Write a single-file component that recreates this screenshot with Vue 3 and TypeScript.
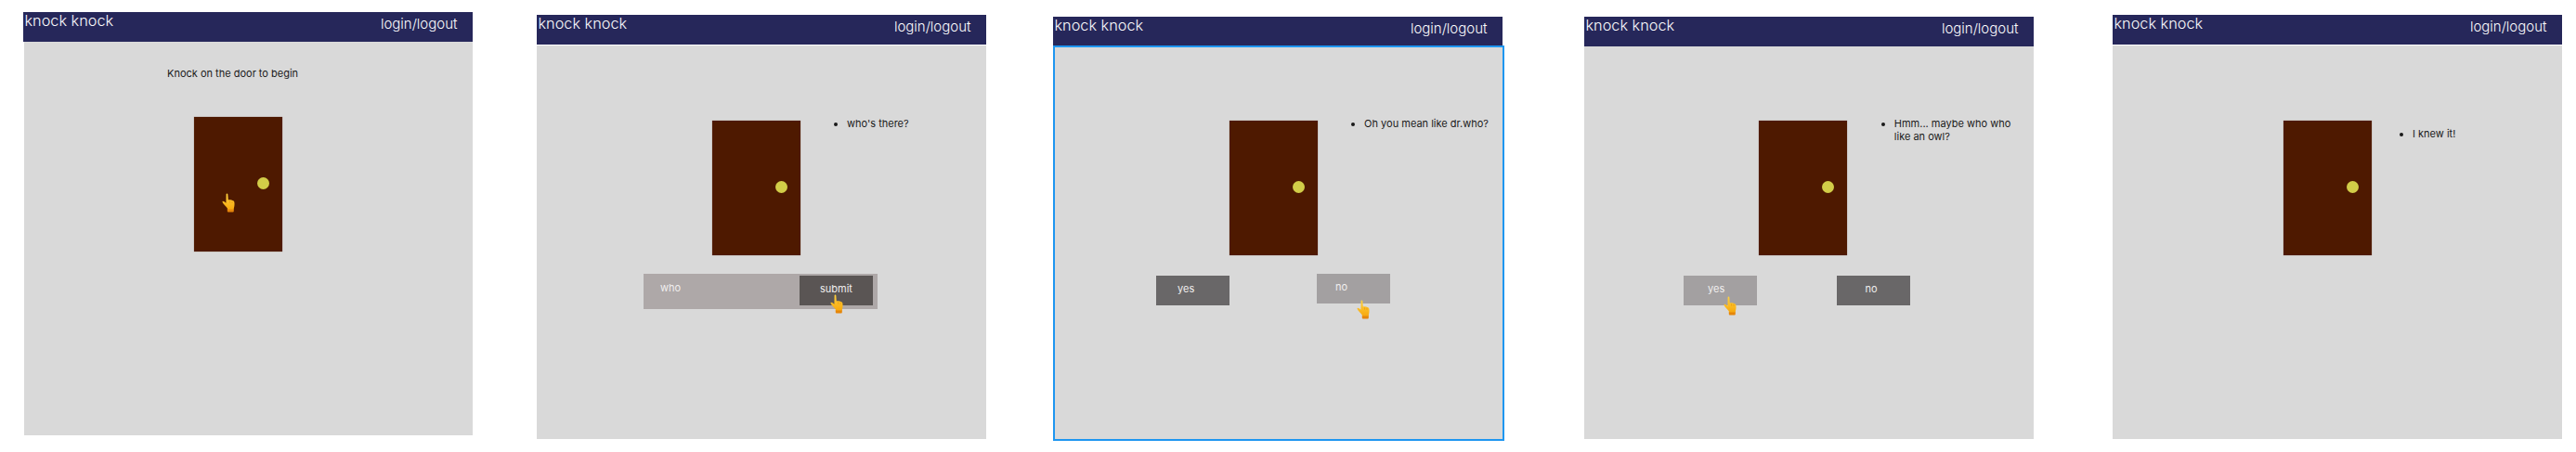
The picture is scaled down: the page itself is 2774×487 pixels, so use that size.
<script setup lang="ts">
interface Choice {
  label: string
  hover?: boolean
}

interface Frame {
  id: string
  prompt?: string
  line?: string
  guess?: string
  choices?: Choice[]
  hand: boolean
}

const frames: Frame[] = [
  { id: 'f1', prompt: 'Knock on the door to begin', hand: true },
  { id: 'f2', line: "who's there?", guess: 'who', hand: true },
  {
    id: 'f3',
    line: 'Oh you mean like dr.who?',
    choices: [{ label: 'yes' }, { label: 'no', hover: true }],
    hand: true,
  },
  {
    id: 'f4',
    line: 'Hmm... maybe who who like an owl?',
    choices: [{ label: 'yes', hover: true }, { label: 'no' }],
    hand: true,
  },
  { id: 'f5', line: 'I knew it!', hand: false },
]
</script>

<template>
  <div class="strip">
    <section v-for="frame in frames" :key="frame.id" class="frame" :class="frame.id">
      <header class="topbar">
        <span class="brand">knock knock</span>
        <a class="auth">login/logout</a>
      </header>

      <main class="stage">
        <p v-if="frame.prompt" class="prompt">{{ frame.prompt }}</p>

        <div class="scene">
          <div class="door"><span class="knob" /></div>
          <ul v-if="frame.line" class="speech">
            <li>{{ frame.line }}</li>
          </ul>
        </div>

        <div v-if="frame.guess" class="guess">
          <span class="guess-text">{{ frame.guess }}</span>
          <button class="submit" type="button">submit</button>
        </div>

        <div v-if="frame.choices" class="choices">
          <button
            v-for="choice in frame.choices"
            :key="choice.label"
            class="choice"
            :class="[choice.label, { hover: choice.hover }]"
            type="button"
          >
            {{ choice.label }}
          </button>
        </div>
      </main>

      <svg v-if="frame.hand" class="hand" viewBox="0 0 14 21" width="14" height="21">
        <defs>
          <linearGradient id="handFill" x1="0" y1="0" x2="0" y2="1">
            <stop offset="0" stop-color="#ffd23f" />
            <stop offset="1" stop-color="#f7a90f" />
          </linearGradient>
        </defs>
        <rect x="5.8" y="16" width="7" height="4.6" rx="1" fill="#e5860b" />
        <path
          d="M4.6 1.2C4.6.3 6.2.3 6.3 1.2L6.8 7.4C8.5 7.2 11 7.6 12.6 8.6C13.4 9.2 13.6 10.5 13.5 12.5C13.4 14.5 13 16 12.4 17.4L6.4 17.4C5.4 15.5 3.8 14 2 12C.8 10.6.2 9.4.6 9C1.3 8.4 3 9.6 4.4 10.8Z"
          fill="url(#handFill)"
        />
        <path d="M8.6 8.2v2.4M11 8.6v2.2" stroke="#e8960f" stroke-width=".7" fill="none" />
      </svg>
    </section>
  </div>
</template>

<style scoped>
.strip {
  display: flex;
  align-items: flex-start;
  padding-left: 25px;
  font-family: Inter, 'Liberation Sans', sans-serif;
}

.frame {
  position: relative;
  flex: none;
  width: 484px;
}

.topbar {
  display: flex;
  justify-content: space-between;
  height: 32px;
  background: #26275a;
  color: #fbfbfd;
  font-weight: 300;
  line-height: 19px;
}

.brand {
  padding-left: 1.5px;
  font-size: 16.3px;
}

.auth {
  padding: 2.5px 16.5px 0 0;
  font-size: 15px;
}

.stage {
  box-sizing: border-box;
  background: #d9d9d9;
  color: #1a1a1a;
  font-size: 11px;
  line-height: 14px;
}

.prompt {
  margin: 0 0 40px 154px;
}

.scene {
  display: flex;
  align-items: flex-start;
}

.door {
  display: flex;
  flex: none;
  justify-content: flex-end;
  box-sizing: border-box;
  width: 95px;
  height: 145px;
  padding: 65px 14px 0 0;
  background: #4e1900;
  box-shadow: 0 0 1px rgba(78, 25, 0, 0.55);
}

.knob {
  width: 13px;
  height: 13px;
  border-radius: 50%;
  background: #d2cd48;
}

.speech {
  margin: -4px 0 0 50.5px;
  padding: 0;
  max-width: 135px;
}

.guess {
  display: flex;
  justify-content: space-between;
  box-sizing: border-box;
  width: 252px;
  height: 38px;
  margin: 20px 0 0 115px;
  padding: 2px 5px 0 18px;
  background: #aea8a8;
  color: #f0eeee;
}

.guess-text {
  padding-top: 6px;
}

.submit,
.choice {
  width: 79px;
  height: 32px;
  margin: 0;
  padding: 0 0 4px;
  border: 0;
  color: #f0eeee;
  font: inherit;
}

.submit {
  background: #5a5554;
}

.choices {
  display: flex;
  align-items: flex-start;
  margin-top: 22px;
}

.choice {
  background: #696768;
  text-align: left;
}

.choice.hover {
  background: #a3a0a1;
}

.hand {
  position: absolute;
}

.f1 {
  margin-top: 13px;
}

.f1 .stage {
  height: 424px;
  margin-left: 1px;
  width: 483px;
  padding-top: 27px;
}

.f1 .door {
  margin-left: 183px;
}

.f1 .hand {
  left: 213.5px;
  top: 195px;
}

.f2 {
  margin: 16px 0 0 69px;
}

.f2 .stage,
.f5 .stage {
  height: 424px;
  margin-top: 1px;
  padding-top: 81px;
}

.f2 .door {
  margin-left: 188.5px;
}

.f2 .hand {
  left: 316px;
  top: 300.7px;
}

.f3 {
  margin: 18px 0 0 72px;
}

.f3 .stage {
  position: relative;
  width: 486px;
  height: 426px;
  margin-top: -1px;
  padding-top: 79px;
  border: 2px solid #1e96f0;
}

.f3 .door {
  margin-left: 187.6px;
}

.f3 .choices {
  margin-left: 109px;
}

.f3 .yes {
  padding-left: 23px;
}

.f3 .no {
  margin: -2px 0 0 94.4px;
  padding-left: 19.5px;
}

.f3 .hand {
  left: 327px;
  top: 304.7px;
}

.f4 {
  margin: 18px 0 0 88px;
}

.f4 .stage {
  height: 423px;
  padding-top: 80px;
}

.f4 .door {
  margin-left: 188.3px;
}

.f4 .choices {
  margin-left: 107px;
}

.f4 .yes {
  padding-left: 26px;
}

.f4 .no {
  margin-left: 86px;
  padding-left: 30.6px;
}

.f4 .hand {
  left: 149.7px;
  top: 301px;
}

.f5 {
  margin: 16px 0 0 85px;
}

.f5 .door {
  margin-left: 184px;
}

.f5 .speech {
  margin: 7px 0 0 44px;
}
</style>

<style>
html,
body {
  margin: 0;
  background: #fff;
}
</style>
